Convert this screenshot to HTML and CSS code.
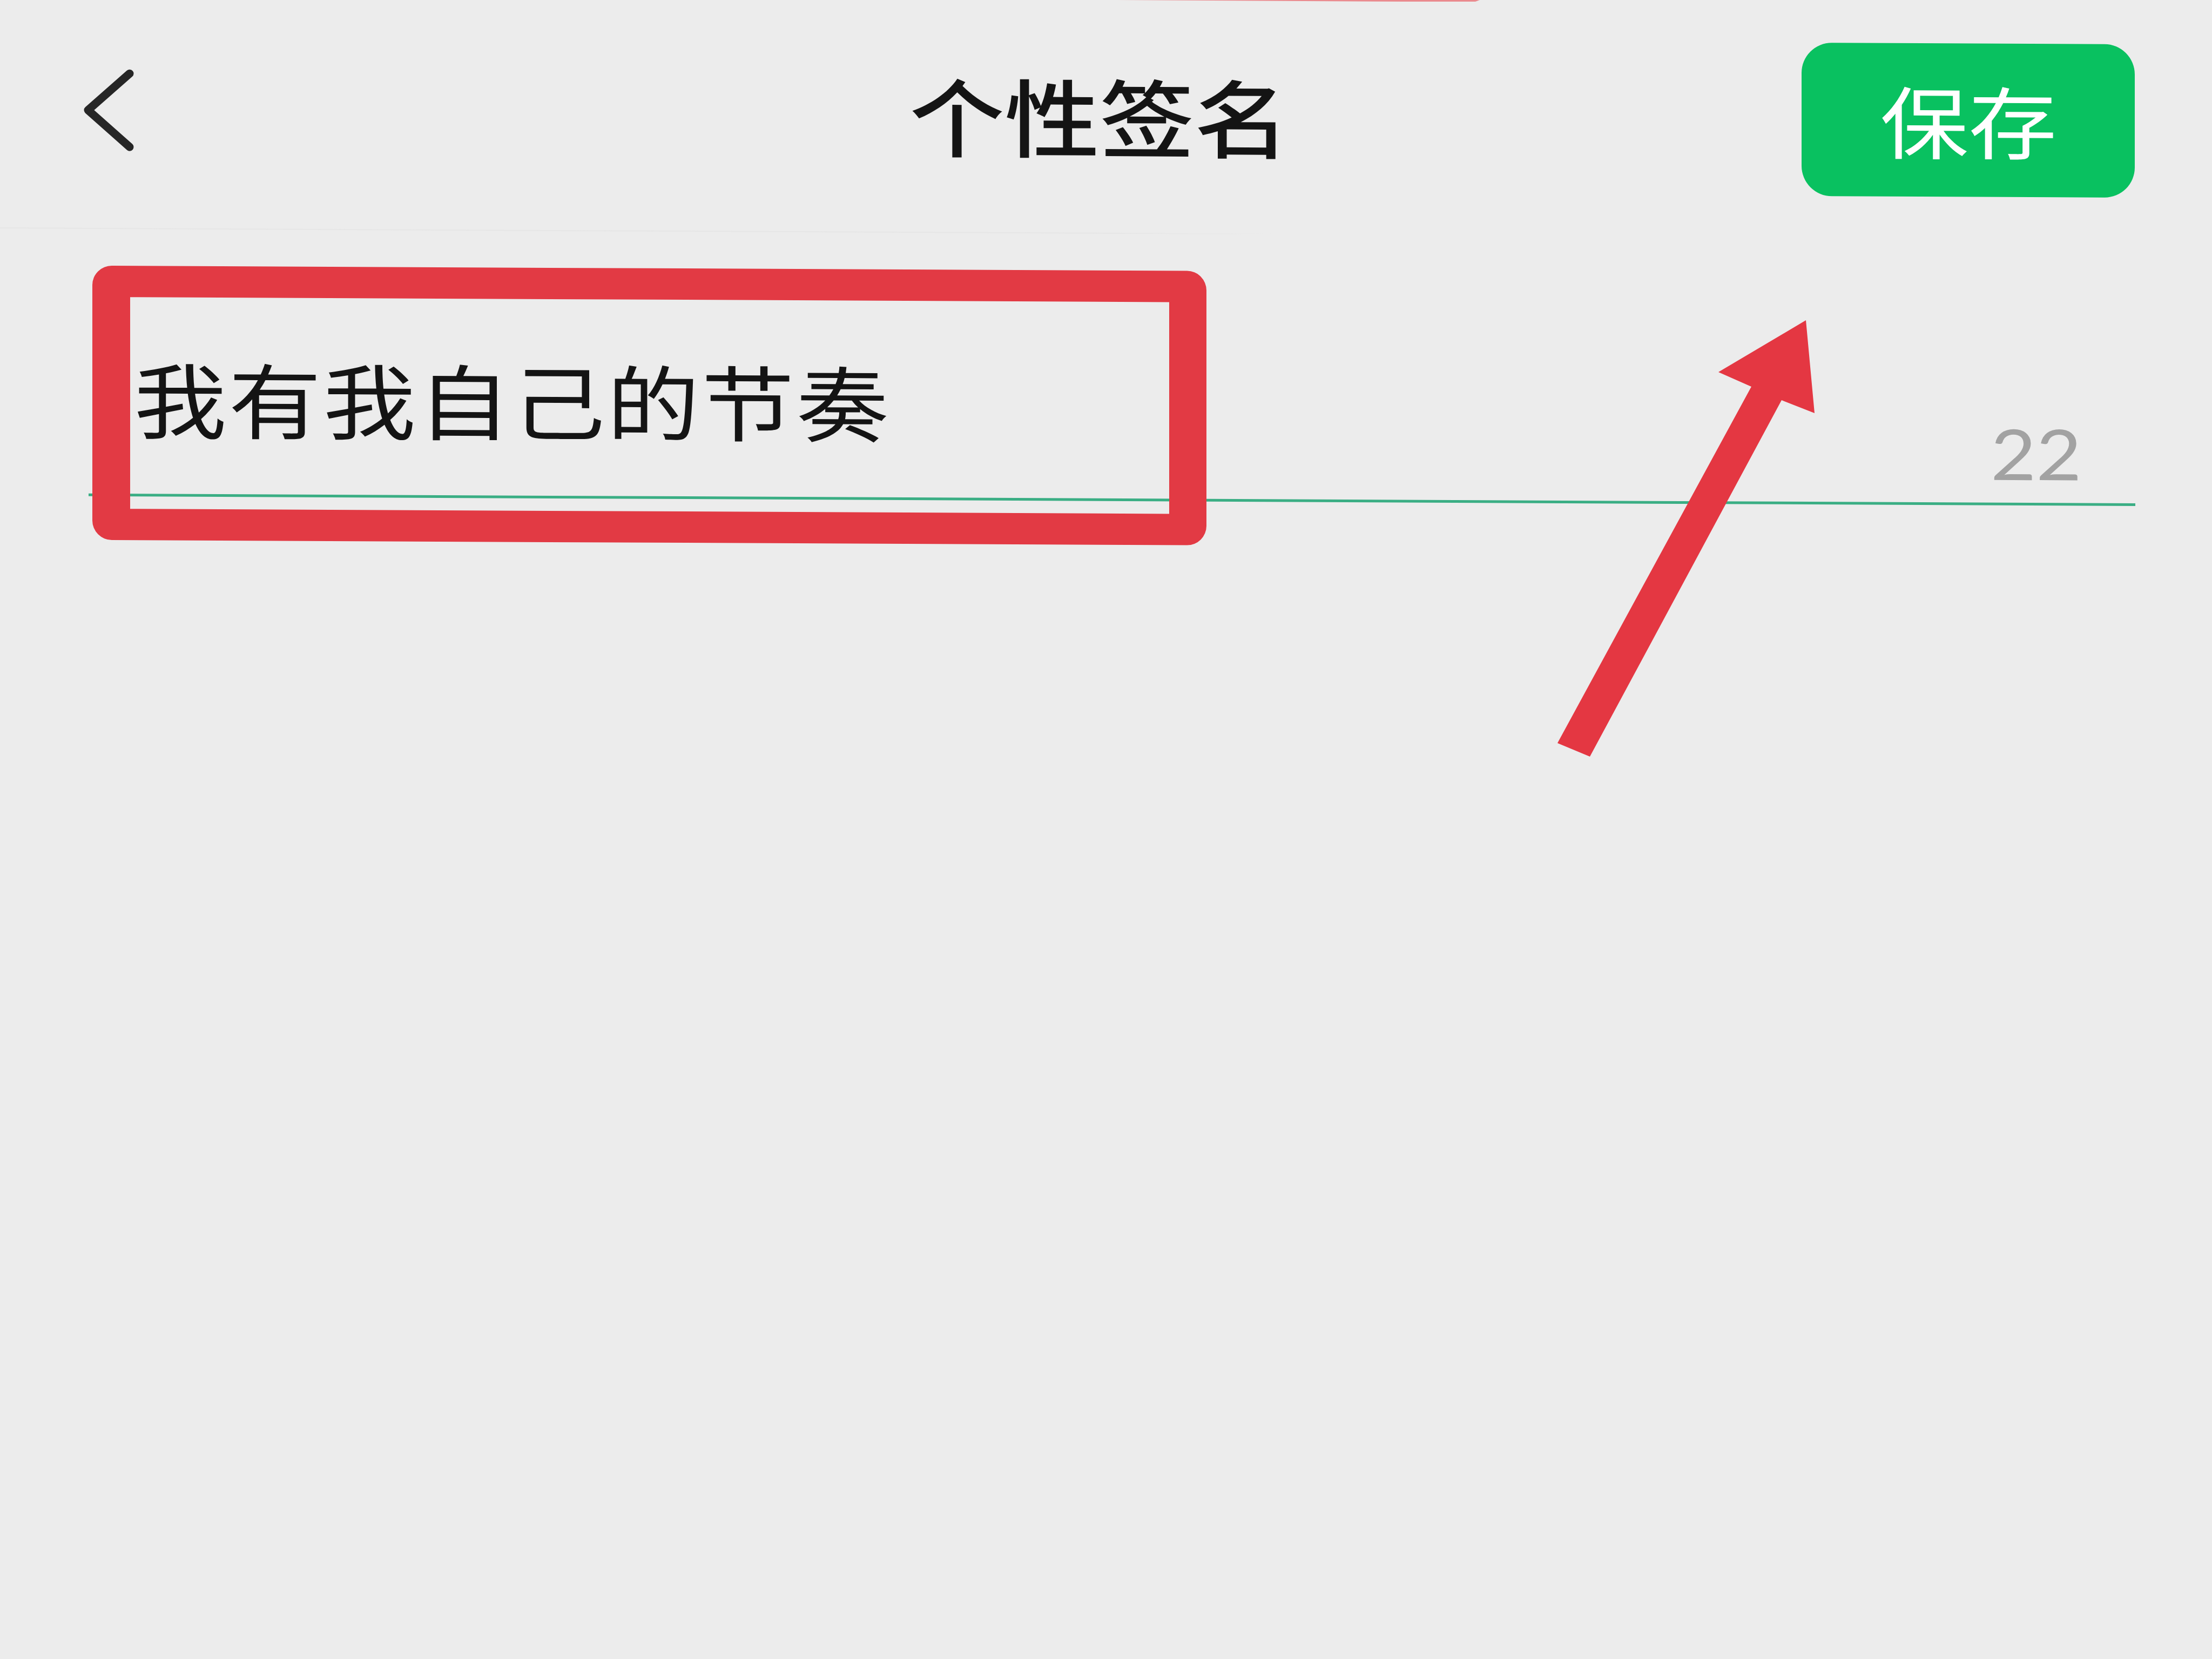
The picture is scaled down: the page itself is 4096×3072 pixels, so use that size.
FILE: index.html
```html
<!DOCTYPE html>
<html lang="zh-CN">
<head>
  <meta charset="UTF-8">
  <title>个性签名</title>
  <link rel="stylesheet" href="styles.css">
</head>
<body>

  <div class="page">
    <div class="header">
      <svg class="back-icon" viewBox="0 0 100 160">
        <path d="M85 12 L8 80 L85 148" />
      </svg>
      <h1 class="title"><span>个性签名</span></h1>
      <button class="save-btn"><span>保存</span></button>
    </div>

    <div class="field">
      <div class="signature"><span>我有我自己的节奏</span></div>
      <div class="counter"><span>22</span></div>
    </div>

    <div class="highlight"></div>
  </div>

  <!-- arrow pointing at the save button -->
  <svg class="marks" viewBox="0 0 4096 3072">
    <polygon class="strip" points="2070,0 2740,0 2732,3 2600,3" />
    <polygon class="arrow" points="3344,593 3182,689 3243,716 2884,1376 2944,1401 3299,741 3360,765" />
  </svg>

</body>
</html>
```

FILE: styles.css
```css
* {
  box-sizing: border-box;
}

body {
  margin: 0;
  width: 4096px;
  height: 3072px;
  overflow: hidden;
  position: relative;
  background-color: #ececec;
  font-family: 'Noto Sans CJK SC', 'Noto Sans', sans-serif;
}

.page {
  position: relative;
  height: 3072px;
  transform: skewY(0.275deg);
  transform-origin: 0 0;
}

.header {
  display: grid;
  grid-template-columns: 581px 1fr 617px;
  align-items: start;
  height: 423px;
  padding: 63px 143px 0 155px;
  border-bottom: 2px solid;
  border-image: linear-gradient(to right, #e6e6e6 0%, #e6e6e6 50%, #ececec 58%) 1;
}

.back-icon {
  width: 100px;
  height: 160px;
  margin-top: 60px;
}

.back-icon path {
  fill: none;
  stroke: #262626;
  stroke-width: 15;
  stroke-linecap: round;
  stroke-linejoin: round;
}

.title {
  margin: 0;
  height: 284px;
  line-height: 278px;
  font-size: 157px;
  font-weight: 500;
  text-align: center;
  color: #141414;
}

.title span,
.save-btn span,
.signature span,
.counter span {
  display: inline-block;
  transform: scaleX(1.12);
}

.save-btn {
  height: 284px;
  padding: 0;
  border: none;
  border-radius: 56px;
  background: #09c160;
  color: #fff;
  font-family: inherit;
  font-size: 146px;
  line-height: 280px;
  cursor: pointer;
}

.save-btn span {
  margin-bottom: 4px;
}

.field {
  display: flex;
  justify-content: space-between;
  height: 495px;
  margin: 0 142px 0 164px;
  padding: 200px 99px 0 84px;
  border-bottom: 5px solid #3aae84;
}

.signature {
  height: 220px;
  line-height: 220px;
  font-size: 152px;
  letter-spacing: 3px;
  white-space: nowrap;
  color: #141414;
}

.signature span {
  transform: scaleX(1.13);
  transform-origin: left center;
}

.counter {
  height: 160px;
  margin-top: 118px;
  line-height: 160px;
  font-family: Lato, 'Noto Sans', sans-serif;
  font-size: 130px;
  color: #a2a2a2;
}

.counter span {
  transform-origin: right center;
}

/* red frame drawn over the input */
.highlight {
  position: absolute;
  left: 171px;
  top: 491px;
  width: 2063px;
  height: 508px;
  border: solid #e23a44;
  border-width: 58px 69px 58px 70px;
  border-radius: 36px;
}

.marks {
  position: absolute;
  left: 0;
  top: 0;
  width: 4096px;
  height: 3072px;
}

.arrow {
  fill: #e43742;
}

.strip {
  fill: #ea8a8e;
}
```
